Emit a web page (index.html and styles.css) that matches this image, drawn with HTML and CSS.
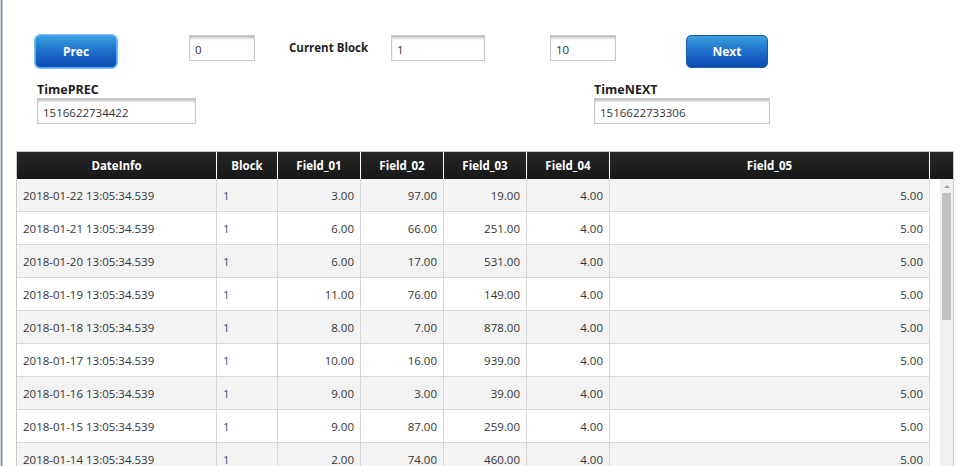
FILE: index.html
```html
<!DOCTYPE html>
<html lang="en">
<head>
<meta charset="UTF-8">
<title>Blocks</title>
<link rel="stylesheet" href="styles.css">
</head>
<body>
<div class="page">
  <div class="pager">
    <button class="btn btn-focus">Prec</button>
    <input type="text" class="field field-small gap-a" value="0">
    <span class="pager-label">Current Block</span>
    <input type="text" class="field field-mid" value="1">
    <input type="text" class="field field-small gap-b" value="10">
    <button class="btn gap-c">Next</button>
  </div>
  <div class="times">
    <div class="time-group">
      <label for="timePrec">TimePREC</label>
      <input type="text" id="timePrec" class="field field-prec" value="1516622734422">
    </div>
    <div class="time-group time-next">
      <label for="timeNext">TimeNEXT</label>
      <input type="text" id="timeNext" class="field field-next" value="1516622733306">
    </div>
  </div>

  <div class="grid">
    <div class="grid-head">
      <div class="row head-row">
        <div class="cell">DateInfo</div>
        <div class="cell">Block</div>
        <div class="cell">Field_01</div>
        <div class="cell">Field_02</div>
        <div class="cell">Field_03</div>
        <div class="cell">Field_04</div>
        <div class="cell">Field_05</div>
      </div>
      <div class="head-spacer"></div>
    </div>
    <div class="grid-body">
      <div class="rows">
        <div class="row">
          <div class="cell">2018-01-22 13:05:34.539</div><div class="cell block">1</div>
          <div class="cell num">3.00</div><div class="cell num">97.00</div><div class="cell num">19.00</div>
          <div class="cell num">4.00</div><div class="cell num">5.00</div>
        </div>
        <div class="row">
          <div class="cell">2018-01-21 13:05:34.539</div><div class="cell block">1</div>
          <div class="cell num">6.00</div><div class="cell num">66.00</div><div class="cell num">251.00</div>
          <div class="cell num">4.00</div><div class="cell num">5.00</div>
        </div>
        <div class="row">
          <div class="cell">2018-01-20 13:05:34.539</div><div class="cell block">1</div>
          <div class="cell num">6.00</div><div class="cell num">17.00</div><div class="cell num">531.00</div>
          <div class="cell num">4.00</div><div class="cell num">5.00</div>
        </div>
        <div class="row">
          <div class="cell">2018-01-19 13:05:34.539</div><div class="cell block">1</div>
          <div class="cell num">11.00</div><div class="cell num">76.00</div><div class="cell num">149.00</div>
          <div class="cell num">4.00</div><div class="cell num">5.00</div>
        </div>
        <div class="row">
          <div class="cell">2018-01-18 13:05:34.539</div><div class="cell block">1</div>
          <div class="cell num">8.00</div><div class="cell num">7.00</div><div class="cell num">878.00</div>
          <div class="cell num">4.00</div><div class="cell num">5.00</div>
        </div>
        <div class="row">
          <div class="cell">2018-01-17 13:05:34.539</div><div class="cell block">1</div>
          <div class="cell num">10.00</div><div class="cell num">16.00</div><div class="cell num">939.00</div>
          <div class="cell num">4.00</div><div class="cell num">5.00</div>
        </div>
        <div class="row">
          <div class="cell">2018-01-16 13:05:34.539</div><div class="cell block">1</div>
          <div class="cell num">9.00</div><div class="cell num">3.00</div><div class="cell num">39.00</div>
          <div class="cell num">4.00</div><div class="cell num">5.00</div>
        </div>
        <div class="row">
          <div class="cell">2018-01-15 13:05:34.539</div><div class="cell block">1</div>
          <div class="cell num">9.00</div><div class="cell num">87.00</div><div class="cell num">259.00</div>
          <div class="cell num">4.00</div><div class="cell num">5.00</div>
        </div>
        <div class="row">
          <div class="cell">2018-01-14 13:05:34.539</div><div class="cell block">1</div>
          <div class="cell num">2.00</div><div class="cell num">74.00</div><div class="cell num">460.00</div>
          <div class="cell num">4.00</div><div class="cell num">5.00</div>
        </div>
        <div class="row">
          <div class="cell">2018-01-13 13:05:34.539</div><div class="cell block">1</div>
          <div class="cell num">7.00</div><div class="cell num">52.00</div><div class="cell num">613.00</div>
          <div class="cell num">4.00</div><div class="cell num">5.00</div>
        </div>
      </div>
      <div class="scrollbar">
        <div class="scroll-up"></div>
        <div class="scroll-thumb"></div>
      </div>
    </div>
  </div>
</div>
</body>
</html>
```
FILE: styles.css
```css
html {
  background: linear-gradient(to right, #cfd5db 0, #cfd5db 1px, #7f8b97 1px, #7f8b97 2px, #c3cbd3 2px, #c3cbd3 3px, #fff 3px);
  min-height: 100%;
}
body {
  font-family: 'Open Sans', 'Noto Sans', sans-serif;
  font-size: 11.5px;
  color: #333;
  margin: 0;
  padding: 0;
  overflow: hidden;
}
.page {
  padding: 35px 0 0 16px;
}
.pager {
  display: flex;
  align-items: flex-start;
  padding-left: 19px;
}
.btn {
  width: 82px;
  height: 33px;
  border: 1px solid #1b5cb0;
  border-radius: 5px;
  background: linear-gradient(#3aa0dc, #1a6ac8 55%, #0d4db2);
  color: #fff;
  font-family: 'Open Sans', sans-serif;
  font-size: 12px;
  font-weight: bold;
  padding: 0;
  cursor: pointer;
}
.btn-focus {
  border-color: #4aa6ff;
  box-shadow: 0 0 0 1px #7cc0ff;
}
.field {
  height: 26px;
  box-sizing: border-box;
  border: 1px solid #c8c8c8;
  background: #fff;
  box-shadow: inset 0 3px 3px -1px rgba(0, 0, 0, 0.28);
  padding: 2px 0 0 5px;
  font-family: 'Open Sans', sans-serif;
  font-size: 11.5px;
  color: #333;
  outline: none;
}
.field-small {
  width: 66px;
}
.field-mid {
  width: 94px;
}
.gap-a {
  margin-left: 72px;
}
.gap-b {
  margin-left: 65px;
}
.gap-c {
  margin-left: 70px;
}
.pager-label {
  width: 78px;
  line-height: 26px;
  font-weight: bold;
  color: #222;
  white-space: nowrap;
  margin: 0 24px 0 34px;
}
.times {
  display: flex;
  padding-left: 21px;
  margin-top: 13px;
}
.time-group label {
  display: block;
  font-size: 12.5px;
  font-weight: bold;
  color: #222;
  line-height: 17px;
}
.time-next {
  margin-left: 398px;
}
.field-prec {
  width: 159px;
}
.field-next {
  width: 176px;
}

/* data grid */
.grid {
  width: 938px;
  box-sizing: border-box;
  border: 1px solid #c9c9c9;
  margin-top: 27px;
}
.grid-head {
  display: flex;
  background: linear-gradient(#262626, #181818);
  height: 27px;
}
.row {
  display: grid;
  grid-template-columns: 200px 61px 83px 83px 83px 83px 320px;
  height: 33px;
  border-bottom: 1px solid #d6d6d6;
  box-sizing: border-box;
}
.head-row {
  height: 27px;
  border-bottom: none;
}
.head-row .cell {
  color: #fff;
  font-weight: bold;
  text-align: center;
  border-right-color: #fff;
  padding: 0;
}
.head-spacer {
  flex: 1;
}
.cell {
  display: flex;
  align-items: center;
  justify-content: flex-start;
  padding: 1px 6px 0;
  border-right: 1px solid #d6d6d6;
  white-space: nowrap;
  overflow: hidden;
}
.head-row .cell {
  justify-content: center;
}
.cell.num {
  justify-content: flex-end;
}
.cell.block {
  color: #264f8a;
}
.grid-body {
  display: flex;
  height: 320px;
  overflow: hidden;
}
.rows .row:nth-child(odd) {
  background: #f3f3f3;
}
.scrollbar {
  width: 13px;
  margin-left: 10px;
  background: #f0f0f0;
  padding-top: 6px;
}
.scroll-up {
  width: 0;
  height: 0;
  margin: 0 auto;
  border-left: 3px solid transparent;
  border-right: 3px solid transparent;
  border-bottom: 3px solid #a3a3a3;
}
.scroll-thumb {
  width: 9px;
  height: 127px;
  margin: 5px auto 0;
  background: #c1c1c1;
}
```
